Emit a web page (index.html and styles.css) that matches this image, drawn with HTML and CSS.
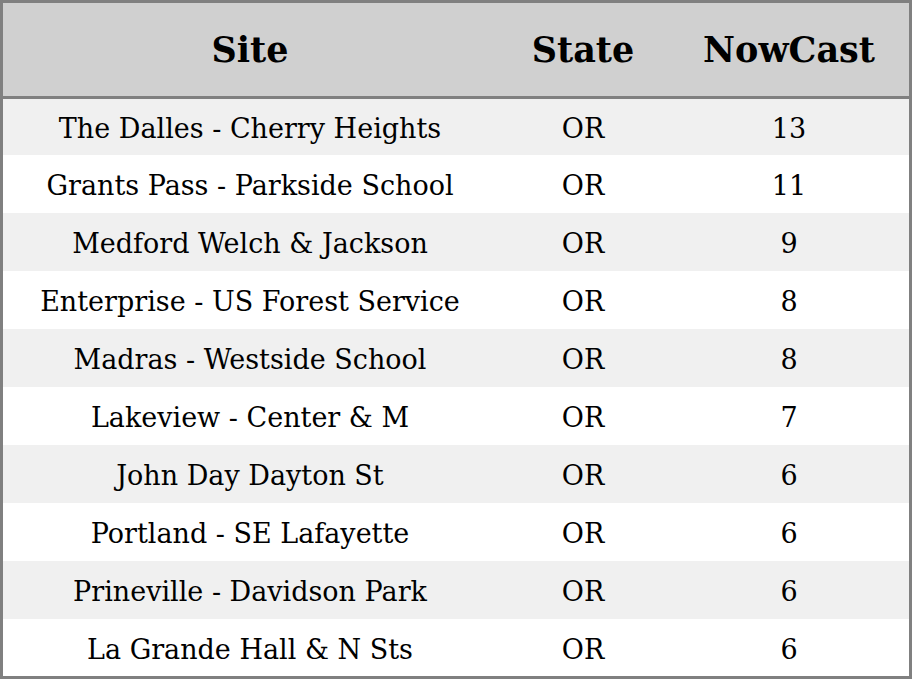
FILE: index.html
```html
<!DOCTYPE html>
<html>
<head>
<meta charset="utf-8">
<link rel="stylesheet" href="styles.css">
</head>
<body>
<table class="aq">
<thead>
<tr class="head"><th class="c-site">Site</th><th class="c-state">State</th><th class="c-now">NowCast</th></tr>
</thead>
<tbody>
<tr class="first odd"><td>The Dalles - Cherry Heights</td><td>OR</td><td>13</td></tr>
<tr class="even"><td>Grants Pass - Parkside School</td><td>OR</td><td>11</td></tr>
<tr class="odd"><td>Medford Welch &amp; Jackson</td><td>OR</td><td>9</td></tr>
<tr class="even"><td>Enterprise - US Forest Service</td><td>OR</td><td>8</td></tr>
<tr class="odd"><td>Madras - Westside School</td><td>OR</td><td>8</td></tr>
<tr class="even"><td>Lakeview - Center &amp; M</td><td>OR</td><td>7</td></tr>
<tr class="odd"><td>John Day Dayton St</td><td>OR</td><td>6</td></tr>
<tr class="even"><td>Portland - SE Lafayette</td><td>OR</td><td>6</td></tr>
<tr class="odd"><td>Prineville - Davidson Park</td><td>OR</td><td>6</td></tr>
<tr class="even last"><td>La Grande Hall &amp; N Sts</td><td>OR</td><td>6</td></tr>
</tbody>
</table>
</body>
</html>
```
FILE: styles.css
```css
html, body {
  margin: 0;
  padding: 0;
  background: #ffffff;
}
.aq {
  width: 912px;
  border: 3px solid #808080;
  border-collapse: separate;
  border-spacing: 0;
  font-family: "DejaVu Serif", serif;
  color: #000;
  table-layout: fixed;
}
.aq th, .aq td {
  padding: 0;
  text-align: center;
  vertical-align: middle;
  line-height: 1;
}
.head {
  height: 96px;
}
.head th {
  background: #d0d0d0;
  font-size: 35px;
  font-weight: bold;
  border-bottom: 3px solid #808080;
}
.c-site { width: 494px; }
.c-state { width: 172px; }
.c-now { width: 240px; }
.aq tbody tr {
  height: 58px;
}
.aq td {
  font-size: 27px;
  padding-top: 3px;
}
.odd td { background: #f0f0f0; }
.even td { background: #ffffff; }
.aq tbody tr.first { height: 56px; }
.aq tbody tr.last { height: 57px; }
```
